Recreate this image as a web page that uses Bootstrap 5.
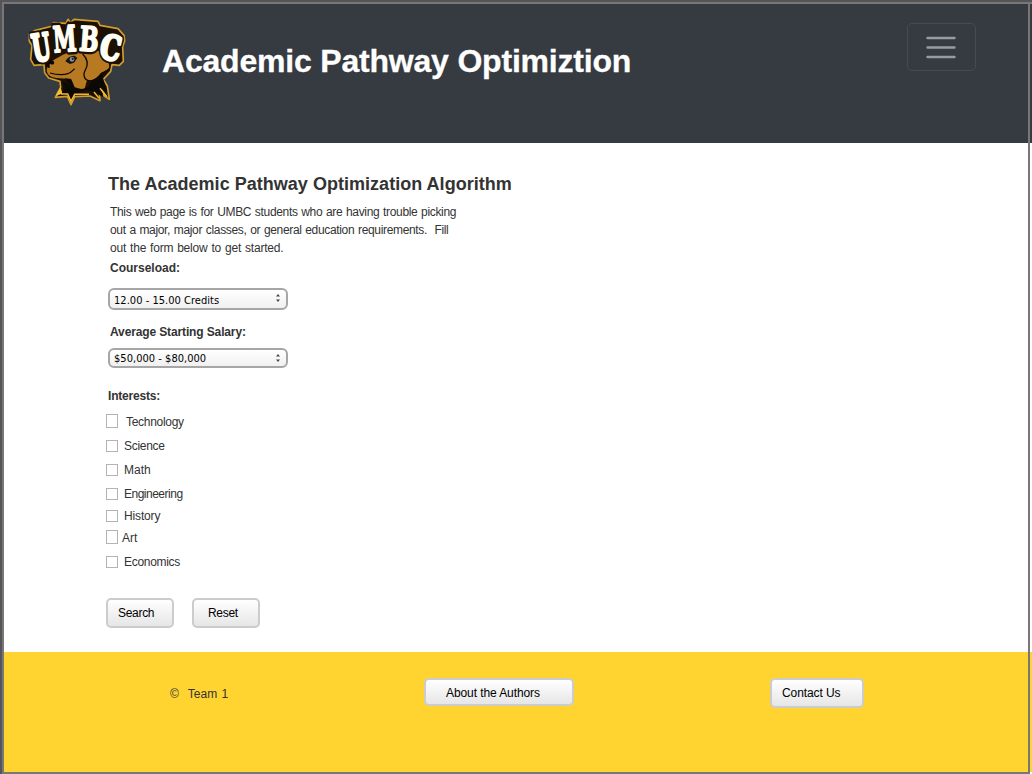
<!DOCTYPE html>
<html lang="en">
<head>
<meta charset="utf-8">
<meta name="viewport" content="width=device-width, initial-scale=1">
<title>Academic Pathway</title>
<link href="https://cdn.jsdelivr.net/npm/bootstrap@5.3.0/dist/css/bootstrap.min.css" rel="stylesheet">
<style>
body{font-family:"Liberation Sans",Arial,sans-serif;font-size:12px;line-height:18px;color:#333;height:774px;overflow:hidden;background:#fff}
.page{height:774px;border-top:2px solid #555459;border-left:2px solid #555459}
.page-body{height:772px;border-top:2px solid #777;border-left:2px solid #777}
.frame-edge{position:absolute;left:2px;top:2px;width:1028px;height:772px;border:2px solid #777;border-left:0;border-top:0;pointer-events:none}
.topbar{height:139px;background:#363a41;padding:0 56px 0 22px}
.logo{width:112px;height:100px;margin:6px 0 0 -6px}
.brand-title{font-size:32px;line-height:38px;font-weight:700;color:#fff;margin:38px 0 0 30px;letter-spacing:-.2px;white-space:nowrap;-webkit-text-stroke:.3px #fff}
.menu-btn{width:69px;height:48px;margin-top:19px;border:1px solid #484b50;border-radius:5px;background:none}
.menu-btn svg{margin:9px 2px 0 0}
.content{height:509px;padding:30px 0 0 102px}
.content h2{font-size:18px;line-height:22px;font-weight:700;margin:0 0 0 2px;white-space:nowrap;letter-spacing:.025px}
.intro{margin:8px 0 0 4px;white-space:nowrap;word-spacing:.7px}
.intro .l1{letter-spacing:-.335px}
.intro .l2{letter-spacing:-.335px}
.intro .l3{letter-spacing:-.18px}
.lbl{display:block;font-weight:700;line-height:16px;margin-left:4px}
.lbl-course{margin-top:3px}
.lbl-salary{margin-top:14px;letter-spacing:-.13px}
.lbl-interests{margin:20px 0 12px 2px;letter-spacing:-.2px}
.pick{width:180px;height:22px;margin:12px 0 0 2px;padding:0 4px;border:2px solid #a6a6a6;border-radius:6px;background:linear-gradient(#fff,#f0f0f0);color:#000;font:11px/21px "DejaVu Sans Condensed","DejaVu Sans",sans-serif;font-stretch:condensed;letter-spacing:.03px}
.pick-short{height:20px;line-height:18px;margin-top:8px}
.pick svg{margin:3px 1px 0 0}
.chk{appearance:none;flex:none;width:12px;height:12px;border:1px solid #b4b4b4;background:#fff;margin:0 6px 0 0}
.chk.tall{height:14px;margin-top:-2px}
.opt{height:16px;line-height:16px;margin-top:8px;letter-spacing:-.3px}
.opt-close{margin-top:6px}
.lbl-interests + .opt{margin-top:-2px}
.key{height:30px;padding:1px 0 0;border:2px solid #ccc;border-radius:5px;background:linear-gradient(#fff,#e6e6e6);color:#000;font-size:12px;line-height:25px;text-align:left;display:block;letter-spacing:-.3px}
.key-search{width:68px;padding-left:10px}
.key-reset{width:68px;padding-left:14px}
.key-about{width:150px;height:28px;padding-left:20px;letter-spacing:-.09px}
.key-contact{width:94px;margin-left:196px;padding-left:10px;letter-spacing:-.1px}
.actions{margin-top:28px;gap:18px}
.footbar{height:120px;background:#ffd430;padding:26px 0 0 166px}
.team{width:254px;margin-top:7px}
.team span{margin-left:9px;word-spacing:1px}
</style>
</head>
<body>
<div class="page"><div class="page-body">
<header class="topbar d-flex align-items-start">
<svg class="logo flex-shrink-0" viewBox="0 0 336 300" role="img" aria-label="UMBC">
<path d="M28 72 L44 62 L98 48 L100 38 L138 40 L144 28 L152 38 L162 28 L234 34 L240 46 L294 56 L312 76 L314 92 L308 110 L310 154 L298 166 L276 164 L272 184 L250 208 L262 228 L268 268 L254 259 L238 250 L240 272 L210 258 L164 260 L153 284 L142 259 L106 262 L122 232 L120 214 L86 204 L74 188 L72 164 L42 166 L32 148 L36 106 L28 94Z" fill="#1c1002" stroke="#cf9d2d" stroke-width="5" stroke-linejoin="round"/>
<path d="M84 166 C84 156 94 155 106 147 C122 138 132 130 150 128 L197 124 L234 122 C254 130 268 148 268 174 C262 182 246 184 240 192 C234 202 222 210 208 212 L200 214 L194 236 L162 238 L152 206 C135 207 116 206 98 202 C86 198 80 188 80 180Z" fill="#b77a22"/>
<path d="M188 132 C204 148 204 166 196 180 C186 198 196 214 213 213 C232 211 237 197 247 190 C256 186 266 182 270 172" fill="none" stroke="#100a03" stroke-width="4"/>
<path d="M214 216 C232 212 240 202 246 194 L252 214 L262 248 L244 232 L250 262 L218 244 L198 240 L166 250 L153 270 L146 248 L126 249 L136 234 L126 213 L152 228 L134 205 L154 208 L164 232 L186 238 L204 232Z" fill="#0b0905"/>
<path d="M77 153 C86 146 102 150 103 158 C102 165 94 164 89 162 L89 174 C82 174 78 166 77 153Z" fill="#0b0905"/>
<path d="M90 189 C112 195 134 194 146 190 C156 186 158 180 164 176" fill="none" stroke="#0b0905" stroke-width="3.5"/>
<path d="M136 154 C142 143 152 136 164 137 L172 144 L162 158 L150 162Z" fill="#171617"/>
<circle cx="156" cy="148" r="7" fill="#96999b"/><circle cx="158" cy="147" r="3.5" fill="#25282b"/>
<path d="M109 257 L121 236 L125 252 L143 252 L153 274 L164 253 L207 253 M240 235 L260 260 M222 246 L237 265" fill="none" stroke="#efb72f" stroke-width="4.5"/>
<path d="M109 257 L122 234 L126 251Z M244 236 L264 262 L250 254Z" fill="#f3c034"/>
<g font-family="DejaVu Serif, serif" font-weight="700" stroke-linejoin="round" fill="#1c1002" stroke="#1c1002" stroke-width="18">
<text transform="translate(43 155) rotate(-9) scale(.68 1.2)" font-size="92">U</text>
<text transform="translate(102 127) rotate(-4) scale(.68 1.16)" font-size="92">M</text>
<text transform="translate(176 121) rotate(4) scale(.74 1.1)" font-size="92">B</text>
<text transform="translate(235 142) rotate(12) scale(.84 1.1)" font-size="92">C</text>
</g>
<g font-family="DejaVu Serif, serif" font-weight="700" stroke-linejoin="round" fill="#fffdf4" stroke="#fffdf4" stroke-width="8">
<text transform="translate(43 155) rotate(-9) scale(.68 1.2)" font-size="92">U</text>
<text transform="translate(102 127) rotate(-4) scale(.68 1.16)" font-size="92" stroke-width="5">M</text>
<text transform="translate(176 121) rotate(4) scale(.74 1.1)" font-size="92" stroke-width="5">B</text>
<text transform="translate(235 142) rotate(12) scale(.84 1.1)" font-size="92">C</text>
</g>
</svg>
<h1 class="brand-title">Academic Pathway Optimiztion</h1>
<button class="menu-btn ms-auto p-0 d-flex justify-content-center" aria-label="Menu"><svg width="30" height="30" viewBox="0 0 30 30"><path d="M1.5 5h27M1.5 14.5h27M1.5 24h27" stroke="#999c9e" stroke-width="2.4" stroke-linecap="round"/></svg></button>
</header>
<main class="content">
<h2>The Academic Pathway Optimization Algorithm</h2>
<p class="intro mb-0"><span class="l1">This web page is for UMBC students who are having trouble picking</span><br><span class="l2">out a major, major classes, or general education requirements.&nbsp; Fill</span><br><span class="l3">out the form below to get started.</span></p>
<span class="lbl lbl-course">Courseload:</span>
<div class="pick d-flex justify-content-between"><span>12.00 - 15.00 Credits</span><svg width="6" height="10" viewBox="0 0 6 10"><path d="M1 3.5L3 1l2 2.5zM1 6.5l2 2.5 2-2.5z" fill="#444"/></svg></div>
<span class="lbl lbl-salary">Average Starting Salary:</span>
<div class="pick pick-short d-flex justify-content-between"><span>$50,000 - $80,000</span><svg width="6" height="10" viewBox="0 0 6 10"><path d="M1 3.5L3 1l2 2.5zM1 6.5l2 2.5 2-2.5z" fill="#444"/></svg></div>
<span class="lbl lbl-interests">Interests:</span>
<label class="opt d-flex align-items-center"><input type="checkbox" class="chk tall me-2"><span>Technology</span></label>
<label class="opt d-flex align-items-center"><input type="checkbox" class="chk"><span>Science</span></label>
<label class="opt d-flex align-items-center"><input type="checkbox" class="chk"><span style="letter-spacing:0">Math</span></label>
<label class="opt d-flex align-items-center"><input type="checkbox" class="chk"><span style="letter-spacing:-.5px">Engineering</span></label>
<label class="opt opt-close d-flex align-items-center"><input type="checkbox" class="chk"><span style="letter-spacing:-.15px">History</span></label>
<label class="opt opt-close d-flex align-items-center"><input type="checkbox" class="chk tall me-1"><span style="letter-spacing:0">Art</span></label>
<label class="opt d-flex align-items-center"><input type="checkbox" class="chk"><span>Economics</span></label>
<div class="actions d-flex">
<button class="key key-search">Search</button>
<button class="key key-reset">Reset</button>
</div>
</main>
<footer class="footbar d-flex align-items-start">
<div class="team">©<span>Team 1</span></div>
<button class="key key-about">About the Authors</button>
<button class="key key-contact">Contact Us</button>
</footer>
</div></div>
<div class="frame-edge"></div>
<script src="https://cdn.jsdelivr.net/npm/bootstrap@5.3.0/dist/js/bootstrap.bundle.min.js"></script>
</body>
</html>
